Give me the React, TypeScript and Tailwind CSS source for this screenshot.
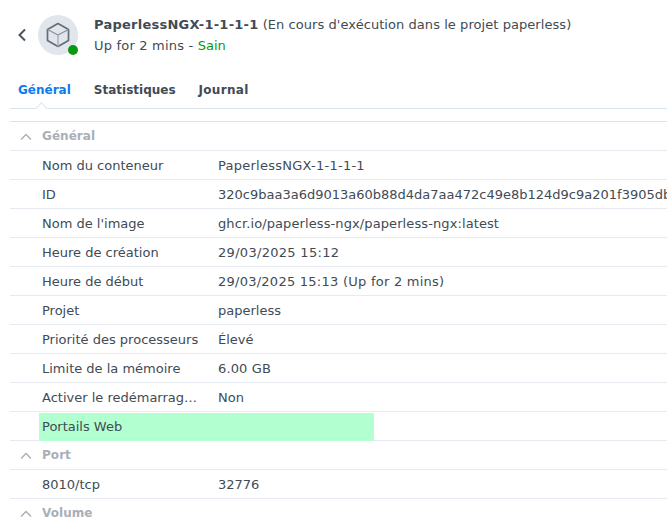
const rows: [string, string, string][] = [
  ["Nom du conteneur", "PaperlessNGX-1-1-1-1", "tracking-[0.25px]"],
  ["ID", "320c9baa3a6d9013a60b88d4da7aa472c49e8b124d9c9a201f3905db", ""],
  ["Nom de l'image", "ghcr.io/paperless-ngx/paperless-ngx:latest", "tracking-[0.1px]"],
  ["Heure de création", "29/03/2025 15:12", "tracking-[0.3px]"],
  ["Heure de début", "29/03/2025 15:13 (Up for 2 mins)", "tracking-[0.25px]"],
  ["Projet", "paperless", ""],
  ["Priorité des processeurs", "Élevé", ""],
  ["Limite de la mémoire", "6.00 GB", "tracking-[0.15px]"],
  ["Activer le redémarrage automatique", "Non", ""],
];

function Section({ title }: { title: string }) {
  return (
    <div className="h-[29px] shrink-0 border-b border-[#e6ebf2] flex items-center">
      <svg width="12" height="7" viewBox="0 0 12 7" className="ml-[10px] mr-[10px]" fill="none" stroke="#a9afb8" strokeWidth="1.4">
        <path d="M1 6.5 L6 1.5 L11 6.5" />
      </svg>
      <span className="font-bold text-[12px] tracking-[0.05px] text-[#a9afb8]">{title}</span>
    </div>
  );
}

function Row({ label, value, cls }: { label: string; value: string; cls: string }) {
  return (
    <div className="h-[29px] shrink-0 border-b border-[#e6ebf2] flex items-center pt-[2px] pl-[32px] whitespace-nowrap">
      <span className="w-[176px] shrink-0 pr-[16px]"><span className="block truncate">{label}</span></span>
      <span className={cls}>{value}</span>
    </div>
  );
}

export default function App() {
  return (
    <div className="w-[667px] h-[525px] overflow-hidden bg-white text-[13px] text-[#414b55] flex flex-col" style={{ fontFamily: '"DejaVu Sans", sans-serif' }}>
      <div className="h-[71px] shrink-0 flex items-start pt-[15px] pl-[17px]">
        <svg width="10" height="14" viewBox="0 0 10 14" className="mt-[13px] mr-[11px]" fill="none" stroke="#4a5560" strokeWidth="2">
          <path d="M8 1.5 L2.5 7 L8 12.5" />
        </svg>
        <div className="relative w-[40px] h-[40px] rounded-full bg-[#e1e6ed] flex items-center justify-center shrink-0">
          <svg width="24" height="26" viewBox="0 0 24 26" fill="none" stroke="#646c76" strokeWidth="1.7" strokeLinejoin="round">
            <path d="M12 1.5 L22.5 7.5 V18.5 L12 24.5 L1.5 18.5 V7.5 Z" />
            <path d="M1.5 7.5 L12 13 L22.5 7.5" stroke="#8a919a" strokeWidth="1.4" />
            <path d="M12 13 V24.5" stroke="#a8aeb6" strokeWidth="1.4" />
          </svg>
          <div className="absolute left-[30px] top-[30px] w-[10px] h-[10px] rounded-full bg-[#079a0f]" />
        </div>
        <div className="ml-[16px] leading-[20px]">
          <div className="whitespace-nowrap"><span className="font-bold tracking-[0.25px]">PaperlessNGX-1-1-1-1</span> <span className="tracking-[0.06px]">(En cours d'exécution dans le projet paperless)</span></div>
          <div className="whitespace-nowrap mt-[1px]"><span className="tracking-[0.2px]">Up for 2 mins - </span><span className="text-[#079a0f]">Sain</span></div>
        </div>
      </div>
      <div className="relative ml-[10px] h-[38px] shrink-0 border-b border-[#d9e3ed] flex items-center pl-[8px] gap-[23px] font-bold text-[12px]">
        <span className="text-[#0a7cf0]">Général</span>
        <span>Statistiques</span>
        <span className="tracking-[0.3px]">Journal</span>
        <div className="absolute left-[27px] top-[33px] w-[9px] h-[9px] rotate-45 bg-white border-l border-t border-[#d9e3ed]" />
      </div>
      <div className="ml-[10px] mt-[12px] border-t border-[#d9e3ed] flex flex-col min-h-0">
        <Section title="Général" />
        {rows.map(([l, v, c]) => <Row key={l} label={l} value={v} cls={c} />)}
        <div className="h-[29px] shrink-0 border-b border-[#e6ebf2] flex items-start pl-[29px]">
          <div className="mt-[1px] w-[335px] h-[28px] bg-[#b2ffd0] pl-[3px] flex items-center">Portails Web</div>
        </div>
        <Section title="Port" />
        <Row label="8010/tcp" value="32776" cls="" />
        <Section title="Volume" />
      </div>
    </div>
  );
}
